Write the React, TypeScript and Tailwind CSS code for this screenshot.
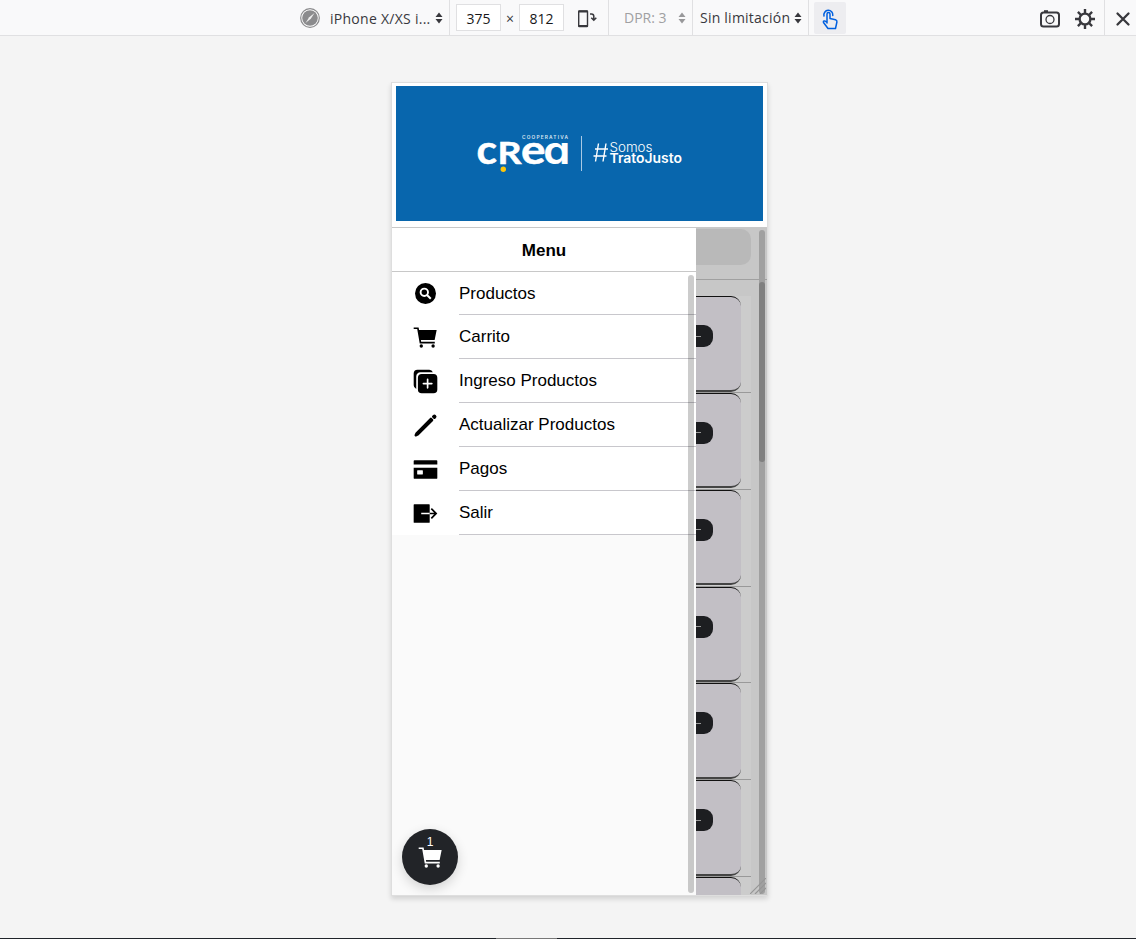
import React from 'react';
import {
  IoCartSharp,
  IoDuplicate,
  IoPencil,
  IoCardSharp,
  IoExitSharp,
} from 'react-icons/io5';

function SearchCircle({ className }: { className?: string }) {
  return (
    <svg viewBox="0 0 27 27" className={className} fill="none">
      <circle cx="13.500" cy="13.500" r="10.500" fill="#000" />
      <circle cx="12.300" cy="12.300" r="3.700" stroke="#fff" strokeWidth="1.900" />
      <path d="m15 15 3.800 3.800" stroke="#fff" strokeWidth="2" />
    </svg>
  );
}

const items = [
  { label: 'Productos', Icon: SearchCircle },
  { label: 'Carrito', Icon: IoCartSharp },
  { label: 'Ingreso Productos', Icon: IoDuplicate },
  { label: 'Actualizar Productos', Icon: IoPencil },
  { label: 'Pagos', Icon: IoCardSharp },
  { label: 'Salir', Icon: IoExitSharp },
];

function Sorter({ className }: { className: string }) {
  return (
    <svg viewBox="0 0 8 12" className={`h-3 w-2 shrink-0 ${className}`} fill="currentColor">
      <path d="M4 .5 7.500 5h-7zM4 11.500.5 7h7z" />
    </svg>
  );
}

function Toolbar() {
  return (
    <header className="flex h-9 shrink-0 border-b border-[#e0e0e2] bg-[#f9f9fa] font-['Open_Sans','Noto_Sans',sans-serif] text-[14px] text-[#38383d]">
      <div className="flex w-[450px] items-center border-r border-[#e0e0e2] pl-[300px]">
        <svg viewBox="0 0 20 20" className="size-5 shrink-0">
          <circle cx="10" cy="10" r="9.300" fill="#fff" stroke="#8b8b8d" strokeWidth="1.200" />
          <circle cx="10" cy="10" r="7.800" fill="#8b8b8d" />
          <path d="m5.500 15 3.700-5.800L14.500 5l-3.700 5.800z" fill="#eee" />
        </svg>
        <span className="ml-[10px] w-[105px] whitespace-nowrap pt-px tracking-[0.27px]">iPhone X/XS i...</span>
        <Sorter className="text-[#38383d]" />
      </div>
      <div className="flex w-[159px] items-center border-r border-[#e0e0e2] pl-[6px]">
        <div className="grid h-[27px] w-[45px] place-items-center border border-[#e0e0e2] bg-white pt-px text-[#18181a]">375</div>
        <span className="w-[18px] pt-px text-center text-[14px]">×</span>
        <div className="grid h-[27px] w-[45px] place-items-center border border-[#e0e0e2] bg-white pt-px text-[#18181a]">812</div>
        <svg viewBox="0 0 20 20" className="ml-[13px] mt-[2px] size-5" fill="none" stroke="#38383d">
          <rect x="1.700" y="2" width="8.800" height="15.500" rx=".5" strokeWidth="1.400" />
          <path d="M1.700 2.500h8.800M1.700 17h8.800" strokeWidth="2" />
          <path d="M13 5h1.500q2.300 0 2.300 2.300V11M14.300 8.700l2.500 2.500 2.500-2.500" strokeWidth="1.500" />
        </svg>
      </div>
      <div className="flex w-[84px] items-center border-r border-[#e0e0e2] pl-[15px] text-[#a0a0a2]">
        <span className="w-[54px] whitespace-nowrap">DPR: 3</span>
        <Sorter className="text-[#98989a]" />
      </div>
      <div className="flex w-[116px] items-center border-r border-[#e0e0e2] pl-[7px]">
        <span className="w-[94px] whitespace-nowrap tracking-[0.23px]">Sin limitación</span>
        <Sorter className="text-[#38383d]" />
      </div>
      <div className="ml-[5px] mt-[2px] grid h-8 w-8 place-items-center rounded-[2px] bg-[#ededf0]">
        <svg viewBox="0 0 20 22" className="mt-px h-[22px] w-5" fill="none" stroke="#0060df" strokeWidth="1.500" strokeLinejoin="round" strokeLinecap="round">
          <path d="M7 15V6a1.500 1.500 0 0 1 3 0v4.500l5.500 1.200q1.700.5 1.400 2.300L15.500 20.500H8L3.500 14.500q-.5-2 1.500-1.500l2 1.500" />
          <path d="M4 8A4.500 4.500 0 1 1 12.800 7.500" />
        </svg>
      </div>
      <div className="ml-auto flex items-center">
        <svg viewBox="0 0 20 20" className="mt-[2px] size-5" fill="none" stroke="#38383d">
          <rect x="1" y="3.500" width="18" height="14" rx="2.500" strokeWidth="2" />
          <path d="M4 2.200h4" strokeWidth="2" />
          <circle cx="10" cy="10.500" r="4" strokeWidth="1.300" />
        </svg>
        <svg viewBox="0 0 20 20" className="ml-[15px] mt-[2px] size-5" fill="none" stroke="#38383d" strokeWidth="2.400">
          <circle cx="10" cy="10" r="5.400" />
          <path d="M10 0v4M10 16v4M0 10h4M16 10h4M2.900 2.900l3.100 3.100M14 14l3.100 3.100M2.900 17.100 6 14M14 6l3.100-3.100" />
        </svg>
        <div className="ml-[9px] flex h-[35px] w-8 items-center border-l border-[#e0e0e2] pl-[10px]">
          <svg viewBox="0 0 16 16" className="mt-[2px] size-4" fill="none" stroke="#38383d" strokeWidth="2.300" strokeLinecap="round">
            <path d="m2.500 2.500 11 11m0-11-11 11" />
          </svg>
        </div>
      </div>
    </header>
  );
}

function Brand() {
  return (
    <svg viewBox="0 0 367 135" className="h-[135px] w-[367px]" fill="#fff">
      <g fontFamily="Lato" fontWeight="700" stroke="#fff" strokeWidth="0.500">
        <text x="80.500" y="78" fontSize="41" textLength="20.500" lengthAdjust="spacingAndGlyphs">c</text>
        <text x="101.500" y="78" fontSize="29.500" textLength="24" lengthAdjust="spacingAndGlyphs">R</text>
        <text x="125" y="78" fontSize="41" textLength="24.500" lengthAdjust="spacingAndGlyphs">e</text>
        <text x="147.300" y="78" fontSize="38" fontFamily="Inter" fontWeight="600" strokeWidth="0.200" textLength="27" lengthAdjust="spacingAndGlyphs" style={{ fontFeatureSettings: '"cv11"' }}>a</text>
      </g>
      <text x="126" y="53" fontSize="4.800" fontFamily="Inter" fontWeight="600" textLength="46" fillOpacity="0.850">COOPERATIVA</text>
      <circle cx="107.300" cy="83.300" r="2.700" fill="#fdc60b" />
      <path d="M185.500 50v35" stroke="#a9c9e4" strokeWidth="1" />
      <path d="m202.500 57.500-3 18M210 57.500l-3 18M199 63h13M197.500 70h13" stroke="#fff" strokeWidth="1.400" />
      <text x="213.500" y="65.500" fontSize="13" fontFamily="Inter" fontWeight="300" textLength="43" lengthAdjust="spacingAndGlyphs">Somos</text>
      <text x="213.500" y="77" fontSize="13.500" fontFamily="Inter" fontWeight="600" textLength="72.500" lengthAdjust="spacingAndGlyphs">TratoJusto</text>
    </svg>
  );
}

function ProductRow() {
  return (
    <div className="h-[96.850px] w-[55px] shrink-0 border-b border-[#999]">
      <div className="flex h-[95.500px] w-[45px] rounded-r-[10px] border-t border-b-2 border-t-[#111] border-b-[#444] bg-[#c2bfc5] pt-[28px]">
        <div className="flex h-[22px] w-[17px] items-center rounded-r-[9px] bg-[#1d1e21]">
          <div className="h-px w-[5px] bg-[#999]" />
        </div>
      </div>
    </div>
  );
}

export default function App() {
  return (
    <div className="flex h-[939px] w-[1136px] flex-col overflow-hidden bg-[#f4f4f4]">
      <Toolbar />
      <main className="flex flex-1 justify-center pt-[46px] pl-[23px]">
        <div className="flex h-[814px] w-[377px] flex-col overflow-hidden border border-[#dedede] bg-white font-['Liberation_Sans',Arial,sans-serif] text-black shadow-[0_3px_5px_rgba(0,0,0,0.14)]">
          <div className="h-[145px] shrink-0 border-b border-[#c8c8c8] px-1 pt-[3px]">
            <div className="h-[135px] bg-[#0866ad]">
              <Brand />
            </div>
          </div>
          <div className="flex min-h-0 flex-1">
            <nav className="relative flex w-[304px] shrink-0 flex-col bg-[#fafafa]">
              <h1 className="flex h-11 items-center justify-center border-b border-[#c8c8c8] bg-white pt-[2px] text-[17px] font-bold">Menu</h1>
              <ul>
                {items.map(({ label, Icon }) => (
                  <li key={label} className="flex h-11 items-center bg-white pl-5 first:h-[43px]">
                    <Icon className="size-[27px] shrink-0" />
                    <span className="ml-5 flex h-full flex-1 items-center border-b border-[#c8c7cc] pt-px text-[17px]">{label}</span>
                  </li>
                ))}
              </ul>
              <div className="absolute top-[47px] right-[2px] bottom-[2px] w-[6px] rounded-full bg-black/20" />
              <button className="absolute bottom-[10px] left-[10px] flex size-14 flex-col items-center rounded-full bg-[#222428] text-white shadow-[0_4px_12px_rgba(0,0,0,0.16)]">
                <span className="mt-[6px] text-[12px] leading-[14px]">1</span>
                <IoCartSharp className="-mt-[5px] size-[27px]" />
              </button>
            </nav>
            <aside className="relative flex flex-1 flex-col overflow-hidden bg-[#c7c7c7]">
              <div className="h-[52px] shrink-0 border-b border-[#a0a0a0] pt-px">
                <div className="h-9 w-[55px] rounded-r-[10px] bg-[#b9b9b9]" />
              </div>
              <div className="mt-4 flex w-[55px] flex-col bg-[#cccccc]">
                {[0, 1, 2, 3, 4, 5, 6].map((n) => (
                  <ProductRow key={n} />
                ))}
              </div>
              <div className="absolute top-[2px] right-[2px] bottom-px w-[6px] rounded-full bg-[#a0a0a0] pt-[52px]">
                <div className="h-[180px] rounded-full bg-[#808080]" />
              </div>
              <svg viewBox="0 0 16 16" className="absolute right-px bottom-px size-4" stroke="#959595" strokeWidth="1.200">
                <path d="M0 16 16 0M5 16 16 5M10 16l6-6" />
              </svg>
            </aside>
          </div>
        </div>
      </main>
      <footer className="flex h-px shrink-0 bg-[#20242a]">
        <div className="ml-[496px] w-[61px] bg-[#777]" />
      </footer>
    </div>
  );
}
